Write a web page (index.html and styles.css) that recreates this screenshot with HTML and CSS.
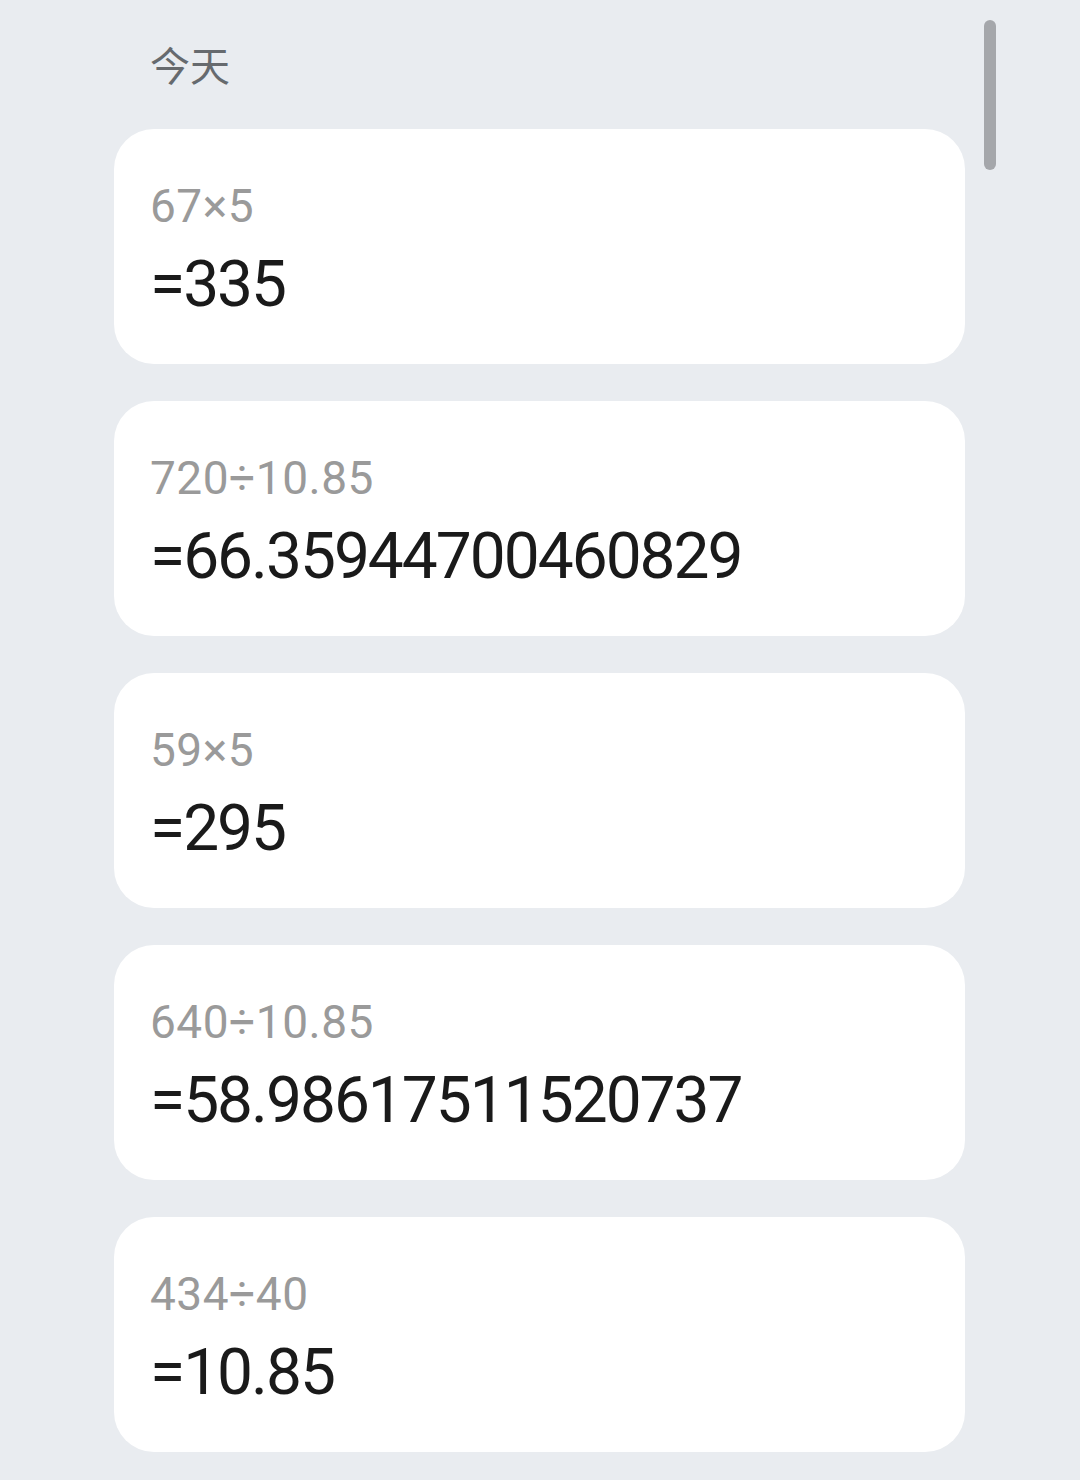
FILE: index.html
```html
<!DOCTYPE html>
<html>
<head>
    <title>历史记录</title>
    <link rel="stylesheet" href="styles.css">
</head>
<body>
    <div class="history">
        <div class="day">今天</div>

        <div class="record">
            <div class="expr">67×5</div>
            <div class="result">=335</div>
        </div>
        <div class="record">
            <div class="expr">720÷10.85</div>
            <div class="result">=66.35944700460829</div>
        </div>
        <div class="record">
            <div class="expr">59×5</div>
            <div class="result">=295</div>
        </div>
        <div class="record">
            <div class="expr">640÷10.85</div>
            <div class="result">=58.98617511520737</div>
        </div>
        <div class="record">
            <div class="expr">434÷40</div>
            <div class="result">=10.85</div>
        </div>
    </div>
    <div class="scrollbar"></div>
</body>
</html>
```

FILE: styles.css
```css
:root {
    --bg: #e9ecf0;
    --card: #ffffff;
    --muted: #9a9a9a;
    --text: #1a1a1a;
}

body {
    background: var(--bg);
    margin: 0;
    font-family: Roboto, "Noto Sans CJK SC", sans-serif;
    height: 1480px;
    overflow: hidden;
}

.history {
    width: 851px;
    margin-left: 114px;
    display: flex;
    flex-direction: column;
    gap: 37px;
}

.day {
    padding: 44px 0 0 36px;
    height: 40px;
    margin-bottom: 8px;
    font-family: "Noto Sans CJK SC", sans-serif;
    font-size: 40px;
    line-height: 40px;
    color: #666a6e;
}

.record {
    background: var(--card);
    border-radius: 40px;
    height: 235px;
    box-sizing: border-box;
    padding: 49px 36px 0;
}

.expr {
    font-size: 46px;
    line-height: 56px;
    letter-spacing: 0.5px;
    color: var(--muted);
}

.result {
    margin-top: 13px;
    font-size: 64px;
    line-height: 76px;
    letter-spacing: -2px;
    color: var(--text);
}

.scrollbar {
    position: absolute;
    top: 20px;
    left: 984px;
    width: 12px;
    height: 150px;
    border-radius: 6px;
    background: #a5a7ab;
}
```
